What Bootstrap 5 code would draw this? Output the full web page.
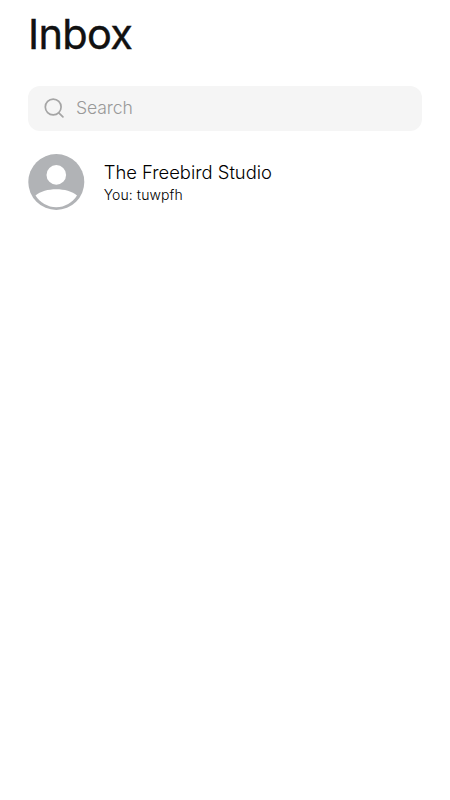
<!DOCTYPE html>
<html lang="en">
<head>
<meta charset="utf-8">
<meta name="viewport" content="width=device-width, initial-scale=1">
<title>Inbox</title>
<link href="https://cdn.jsdelivr.net/npm/bootstrap@5.3.0/dist/css/bootstrap.min.css" rel="stylesheet">
<style>
body{font-family:Inter,"Liberation Sans",sans-serif;color:#111;background:#fff}
.inbox-page{padding:7px 28px 0}
.inbox-title{font-size:41.5px;line-height:54px;font-weight:400;-webkit-text-stroke:.4px #111;letter-spacing:-.7px;height:55px}
.search-box{height:44.5px;margin-top:24px;padding:0 16px;background:#f5f5f5;border-radius:12px;gap:12px}
.search-box input{font-size:17.6px;font-weight:300;line-height:24px;letter-spacing:-.1px;color:#111}
.search-box input::placeholder{color:#999;opacity:1}
.thread{margin-top:23.5px;gap:19.2px;color:#000}
.thread-name{font-size:18.4px;line-height:24px;font-weight:300}
.thread-preview{font-size:14px;line-height:21px;font-weight:300;letter-spacing:.1px}
</style>
</head>
<body>
<main class="inbox-page">
<h1 class="inbox-title m-0">Inbox</h1>
<label class="search-box d-flex align-items-center">
<svg class="flex-shrink-0" width="20" height="20" viewBox="0 0 20 20" fill="none" stroke="#a5a5a5" stroke-width="1.7" stroke-linecap="round"><circle cx="9.2" cy="9" r="7.9"/><path d="M14.8 14.8 18.9 18.9"/></svg>
<input class="border-0 bg-transparent p-0 flex-grow-1" type="text" placeholder="Search" aria-label="Search">
</label>
<a class="thread d-flex align-items-center text-decoration-none" href="#">
<svg class="flex-shrink-0" width="56.5" height="56" viewBox="0 0 56.5 56"><circle cx="28.3" cy="28" r="28" fill="#b1b3b6"/><circle cx="28.3" cy="20.9" r="9.8" fill="#fff"/><path d="M7.5 41.5C17 33.3 39.5 33.3 49 41.5A24.2 24.2 0 0 1 7.5 41.5Z" fill="#fff"/></svg>
<div><div class="thread-name">The Freebird Studio</div><div class="thread-preview">You: tuwpfh</div></div>
</a>
</main>
<script src="https://cdn.jsdelivr.net/npm/bootstrap@5.3.0/dist/js/bootstrap.bundle.min.js"></script>
</body>
</html>
